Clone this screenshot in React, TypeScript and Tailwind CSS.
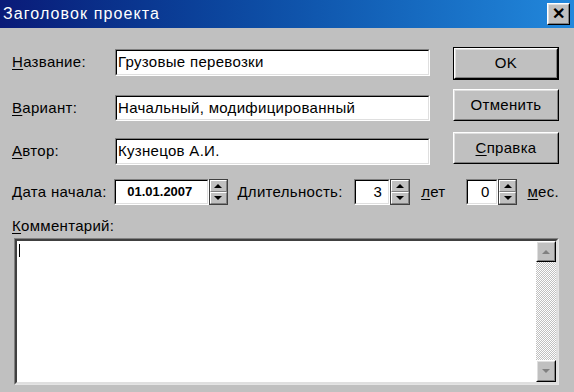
import React from 'react';

type BoxProps = { className?: string; children?: React.ReactNode };

const Sunken: React.FC<BoxProps> = ({ className = '', children }) => (
  <div className={`border border-t-[#808080] border-l-[#808080] border-b-white border-r-white ${className}`}>
    <div className="flex h-full w-full items-center border border-t-black border-l-black border-b-[#dfdfdf] border-r-[#dfdfdf] bg-white">
      {children}
    </div>
  </div>
);

const Raised: React.FC<BoxProps> = ({ className = '', children }) => (
  <div className={`border border-t-white border-l-white border-b-black border-r-black ${className}`}>
    <div className="flex h-full w-full items-center justify-center border border-t-[#dfdfdf] border-l-[#dfdfdf] border-b-[#808080] border-r-[#808080] bg-[#c0c0c0]">
      {children}
    </div>
  </div>
);

const Mn: React.FC<{ c: string }> = ({ c }) => <span className="underline underline-offset-2">{c}</span>;

const Up = ({ color = 'border-b-black' }: { color?: string }) => (
  <div className={`h-0 w-0 border-x-[4px] border-b-[4px] border-x-transparent ${color}`} />
);
const Down = ({ color = 'border-t-black' }: { color?: string }) => (
  <div className={`h-0 w-0 border-x-[4px] border-t-[4px] border-x-transparent ${color}`} />
);

const Spinner = () => (
  <div className="flex h-[26px] w-[20px] flex-col border border-[#404040]">
    <div className="flex flex-1 items-center justify-center border border-t-white border-l-white border-b-[#808080] border-r-[#808080] bg-[#c0c0c0]">
      <Up />
    </div>
    <div className="flex flex-1 items-center justify-center border border-t-white border-l-white border-b-[#808080] border-r-[#808080] bg-[#c0c0c0]">
      <Down />
    </div>
  </div>
);

export default function App() {
  return (
    <div className="flex h-[392px] w-[574px] flex-col overflow-hidden bg-[#c0c0c0] font-['Liberation_Sans',Arial,sans-serif] text-[15px] tracking-[0.3px] text-black">
      {/* title bar */}
      <div className="flex h-[28px] shrink-0 items-center justify-between bg-gradient-to-r from-[#0a1a78] to-[#2288dc] pl-[3px] pr-[4px]">
        <span className="text-[16px] tracking-[1.1px] text-white">Заголовок проекта</span>
        <Raised className="h-[22px] w-[23px]">
          <span className="text-[16px] font-bold leading-none">✕</span>
        </Raised>
      </div>

      <div className="flex flex-col pl-[12px] pr-[15px]">
        {/* name / variant / author + buttons */}
        <div className="flex">
          <div className="flex flex-col pt-[21px]">
            <div className="flex h-[27px] items-center">
              <span className="w-[103px]"><Mn c="Н" />азвание:</span>
              <Sunken className="h-[27px] w-[315px]"><span className="pl-[1px]">Грузовые перевозки</span></Sunken>
            </div>
            <div className="mt-[19px] flex h-[26px] items-center">
              <span className="w-[103px]"><Mn c="В" />ариант:</span>
              <Sunken className="h-[26px] w-[315px]"><span className="pl-[1px]">Начальный, модифицированный</span></Sunken>
            </div>
            <div className="mt-[17px] flex h-[27px] items-center">
              <span className="w-[103px]"><Mn c="А" />втор:</span>
              <Sunken className="h-[27px] w-[315px]"><span className="pl-[1px]">Кузнецов А.И.</span></Sunken>
            </div>
          </div>
          <div className="ml-[23px] flex flex-col pt-[19px]">
            <div className="h-[33px] w-[106px] border border-black">
              <Raised className="h-full w-full">OK</Raised>
            </div>
            <Raised className="mt-[9px] h-[32px] w-[106px]">Отменить</Raised>
            <Raised className="mt-[11px] h-[32px] w-[106px]"><span><Mn c="С" />правка</span></Raised>
          </div>
        </div>

        {/* date / duration */}
        <div className="mt-[14px] flex h-[26px] items-center">
          <span className="w-[103px]"><Mn c="Д" />ата начала:</span>
          <Sunken className="h-[26px] w-[95px]">
            <span className="pl-[11px] text-[13px] font-bold tracking-normal">01.01.2007</span>
          </Sunken>
          <Spinner />
          <span className="ml-[9px] w-[117px]">Длительность:</span>
          <Sunken className="h-[26px] w-[37px]">
            <span className="w-full pr-[6px] text-right">3</span>
          </Sunken>
          <Spinner />
          <span className="ml-[11px] w-[45px]"><Mn c="л" />ет</span>
          <Sunken className="h-[26px] w-[32px]">
            <span className="w-full pr-[6px] text-right">0</span>
          </Sunken>
          <Spinner />
          <span className="ml-[10px]"><Mn c="м" />ес.</span>
        </div>

        {/* comment */}
        <div className="mt-[12px] flex h-[18px] items-center">
          <span><Mn c="К" />омментарий:</span>
        </div>
        <div className="ml-[2px] mt-[3px] flex h-[147px] w-[545px] border border-t-[#808080] border-l-[#808080] border-b-[#e4e4e4] border-r-[#e4e4e4]">
          <div className="flex flex-1 border-2 border-t-[#404040] border-l-[#404040] border-b-[#dfdfdf] border-r-[#dfdfdf] bg-white">
            <div className="flex-1 pl-[2px] pt-[3px]">
              <div className="h-[13px] w-[1px] bg-black" />
            </div>
            <div className="flex w-[20px] flex-col">
              <Raised className="h-[21px] w-[20px]"><Up color="border-b-[#808080]" /></Raised>
              <div className="flex-1 bg-[repeating-conic-gradient(#c0c0c0_0_25%,#ffffff_0_50%)] bg-[length:2px_2px]" />
              <Raised className="h-[22px] w-[20px]"><Down color="border-t-[#808080]" /></Raised>
            </div>
          </div>
        </div>
      </div>
    </div>
  );
}
